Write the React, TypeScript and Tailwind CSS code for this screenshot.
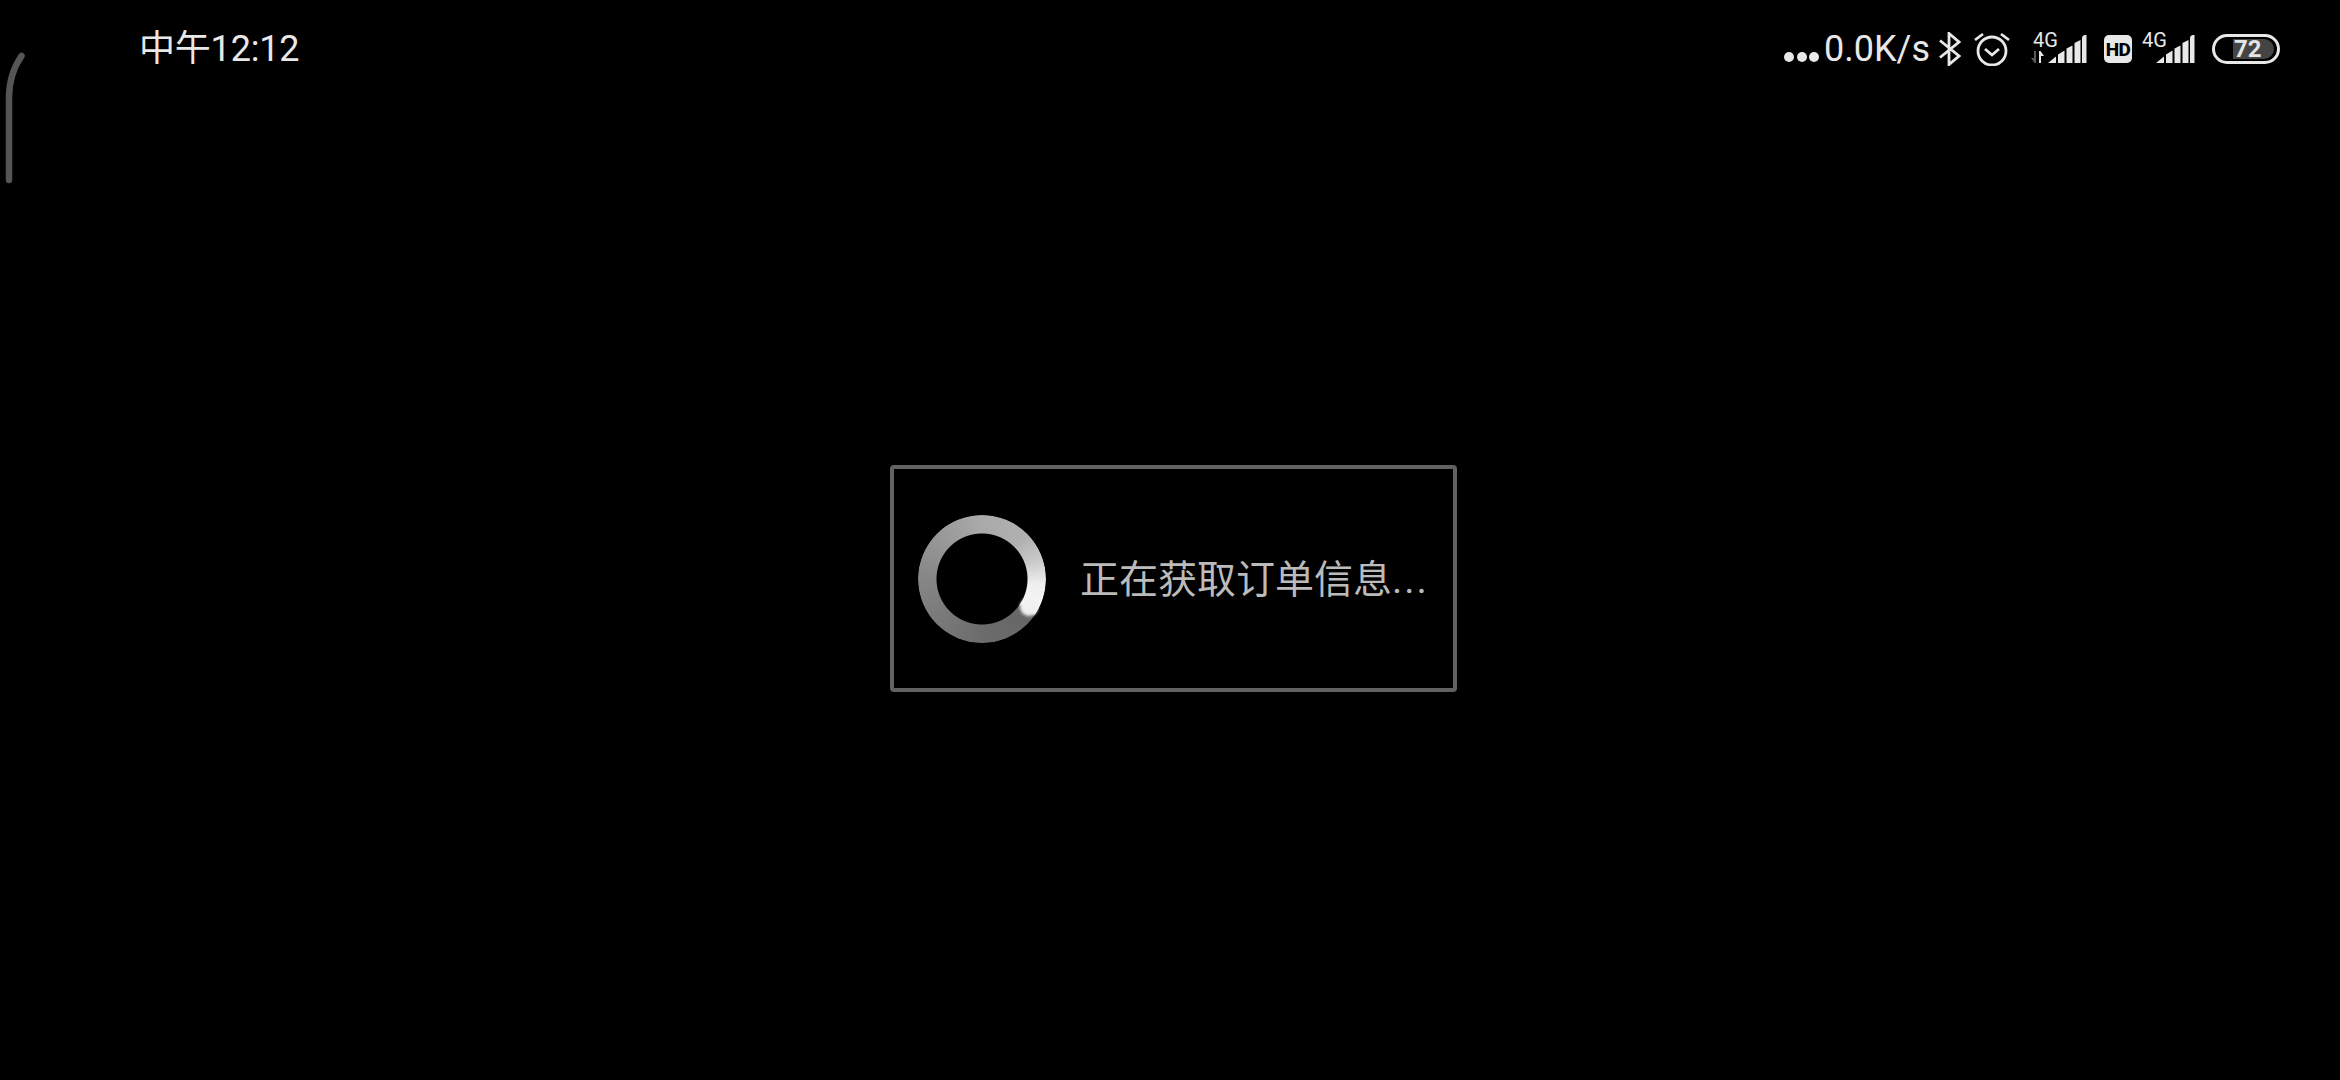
const sans = 'font-["Roboto","Noto_Sans_CJK_SC",sans-serif]'

function Signal({ withArrows }: { withArrows?: boolean }) {
  return (
    <div className={withArrows ? 'relative h-7 w-[57px]' : 'relative h-7 w-[54px]'}>
      <span className={withArrows ? 'absolute top-[-5px] left-[2px] text-[20px] leading-[20px] text-[#e8e8e8]' : 'absolute top-[-5px] left-0 text-[20px] leading-[20px] text-[#e8e8e8]'}>
        4G
      </span>
      <svg className="absolute right-0 bottom-0" width="57" height="28" viewBox="0 0 57 28" fill="#e8e8e8">
        {withArrows && (
          <>
            <path d="M5 16v12h-1.500l-3.500-5h3v-7z" fill="#5a5a5a" />
            <path d="M8 28v-12h1.500l3.500 5h-3v7z" />
          </>
        )}
        <path d="M17 28l8-6.500v6.500z" />
        <path d="M27 28v-8.500l6.500-4v12.500z" />
        <path d="M35.500 28v-14.500l6-3v17.500z" />
        <path d="M43.500 28v-20l6-3v23z" />
        <path d="M51 28v-25q0-2.500 2.500-3h2v28z" />
      </svg>
    </div>
  )
}

export default function App() {
  return (
    <div className={`relative flex h-[1080px] w-[2340px] flex-col overflow-hidden bg-black ${sans}`}>
      {/* rounded corner sliver on the left edge */}
      <svg className="absolute top-[50px] left-[3px]" width="24" height="140" viewBox="0 0 24 140" fill="none">
        <path d="M18.500 6Q6 24 6 48V130" stroke="#555" strokeWidth="6.500" strokeLinecap="round" />
      </svg>

      <header className="flex h-[98px] items-center pr-[60px] pl-[139px] text-[36px] text-[#e8e8e8]">
        <span className="tracking-[-0.2px]">中午12:12</span>
        <div className="ml-auto flex items-center">
          <div className="mt-[16px] flex gap-[2.500px]">
            <i className="h-[10px] w-[10px] rounded-full bg-[#e8e8e8]" />
            <i className="h-[10px] w-[10px] rounded-full bg-[#e8e8e8]" />
            <i className="h-[10px] w-[10px] rounded-full bg-[#e8e8e8]" />
          </div>
          <span className="ml-[5px]">0.0K/s</span>
          <svg className="ml-[9px]" width="22" height="34" viewBox="0 0 22 34" fill="none" stroke="#e8e8e8" strokeWidth="2.800">
            <path d="M1 8.500L20 24 10 32.500V1.500L20 10 1 25.500" />
          </svg>
          <svg className="ml-[13px]" width="36" height="34" viewBox="0 0 36 34" fill="none" stroke="#e8e8e8" strokeWidth="2.800">
            <circle cx="18" cy="19" r="14" />
            <path d="M11 17l7 6 7-6" />
            <path d="M1 8l8-6M27 2l8 6" />
          </svg>
          <div className="ml-[21px]">
            <Signal withArrows />
          </div>
          <div className="ml-[16px] flex h-7 w-7 items-center justify-center rounded-[5px] bg-[#e8e8e8] text-[19px] leading-none font-extrabold tracking-[-0.5px] text-black">
            HD
          </div>
          <div className="ml-[10px]">
            <Signal />
          </div>
          <div className="ml-[16px] flex h-[30px] w-[68px] items-center justify-end rounded-full border-[3px] border-[#e8e8e8] pr-[3px]">
            <div className="h-[20px] w-[41px] rounded-r-full bg-[#444] pl-[1px] text-[24px] leading-[20px] font-bold text-[#e4e4e4]">
              72
            </div>
          </div>
        </div>
      </header>

      <main className="flex flex-1 justify-center pt-[367px] pl-[7px]">
        <div className="flex h-[227px] w-[567px] items-center rounded-[4px] border-[4px] border-[#626262] pl-[24px]">
          <div className="relative h-[128px] w-[128px]">
            <div className="h-full w-full rounded-full bg-[conic-gradient(#aaaaaa_0deg,#b0b0b0_45deg,#c8c8c8_70deg,#eeeeee_95deg,#f8f8f8_122deg,#666666_126deg,#6c6c6c_180deg,#868686_270deg,#aaaaaa_360deg)] [mask-image:radial-gradient(circle,transparent_45px,black_46px)]" />
            <span className="absolute top-[83px] left-[102px] h-[18px] w-[18px] rounded-full bg-[#f0f0f0] blur-[1.500px]" />
          </div>
          <span className="mt-[4px] ml-[34px] text-[39px] leading-none whitespace-nowrap text-[#bbb]">
            正在获取订单信息<span className="tracking-[2px]">...</span>
          </span>
        </div>
      </main>
    </div>
  )
}
